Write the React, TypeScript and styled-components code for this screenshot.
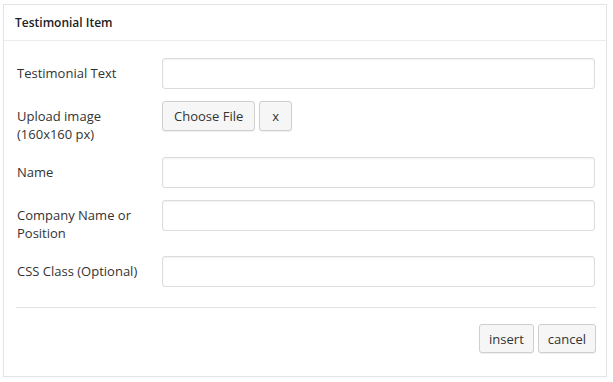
import React from "react"
import styled, { createGlobalStyle } from "styled-components"

const GlobalStyle = createGlobalStyle`
  html, body {
    margin: 0;
    padding: 0;
    background: #ffffff;
  }
  body {
    font-family: "Open Sans", "Liberation Sans", sans-serif;
    color: #333333;
  }
`

const Panel = styled.div`
  margin: 4px 0 0 3px;
  width: 604px;
  height: 373px;
  border: 1px solid #e4e4e4;
  background: #ffffff;
  box-sizing: border-box;
  display: flex;
  flex-direction: column;
`

const Header = styled.div`
  height: 35px;
  border-bottom: 1px solid #ececec;
  display: flex;
  align-items: center;
  padding: 0 11px;
  font-size: 12px;
  font-weight: 600;
  color: #222222;
`

const Body = styled.div`
  padding: 17px 11px 0 13px;
  display: flex;
  flex-direction: column;
  gap: 12px;
`

const Row = styled.div`
  display: grid;
  grid-template-columns: 145px 1fr;
  align-items: start;
`

const Label = styled.label`
  font-size: 13px;
  line-height: 18px;
  padding: 6px 0 2px;
  color: #333333;
`

const TextInput = styled.input`
  height: 31px;
  width: 100%;
  box-sizing: border-box;
  border: 1px solid #dcdcdc;
  border-radius: 3px;
  box-shadow: inset 0 1px 2px rgba(0, 0, 0, 0.06);
  background: #ffffff;
  outline: none;
`

const Buttons = styled.div`
  display: flex;
  gap: 4px;
`

const Button = styled.button<{ $pad?: number; $h?: number }>`
  height: ${({ $h }) => $h ?? 30}px;
  padding: 0 ${({ $pad }) => $pad ?? 12}px;
  border: 1px solid #cfcfcf;
  border-radius: 3px;
  background: #f6f6f6;
  box-shadow: 0 1px 0 rgba(0, 0, 0, 0.06);
  font-family: "Open Sans", "Liberation Sans", sans-serif;
  font-size: 13px;
  color: #333333;
  cursor: pointer;
`

const Divider = styled.hr`
  margin: 20px 10px 0 12px;
  border: 0;
  border-top: 1px solid #e2e2e2;
`

const Footer = styled.div`
  display: flex;
  justify-content: flex-end;
  gap: 4px;
  padding: 16px 10px 0 0;
`

const fields = [
  { lines: ["Testimonial Text"], kind: "text" },
  { lines: ["Upload image", "(160x160 px)"], kind: "file" },
  { lines: ["Name"], kind: "text" },
  { lines: ["Company Name or", "Position"], kind: "text" },
  { lines: ["CSS Class (Optional)"], kind: "text" },
]

export default function App() {
  return (
    <>
      <GlobalStyle />
      <Panel>
        <Header>Testimonial Item</Header>
        <Body>
          {fields.map((f) => (
            <Row key={f.lines.join(" ")}>
              <Label>
                {f.lines.map((line, i) => (
                  <React.Fragment key={line}>
                    {i > 0 && <br />}
                    {line}
                  </React.Fragment>
                ))}
              </Label>
              {f.kind === "file" ? (
                <Buttons>
                  <Button $pad={11}>Choose File</Button>
                  <Button $pad={12}>x</Button>
                </Buttons>
              ) : (
                <TextInput type="text" />
              )}
            </Row>
          ))}
        </Body>
        <Divider />
        <Footer>
          <Button $pad={9} $h={29}>insert</Button>
          <Button $pad={9} $h={29}>cancel</Button>
        </Footer>
      </Panel>
    </>
  )
}
